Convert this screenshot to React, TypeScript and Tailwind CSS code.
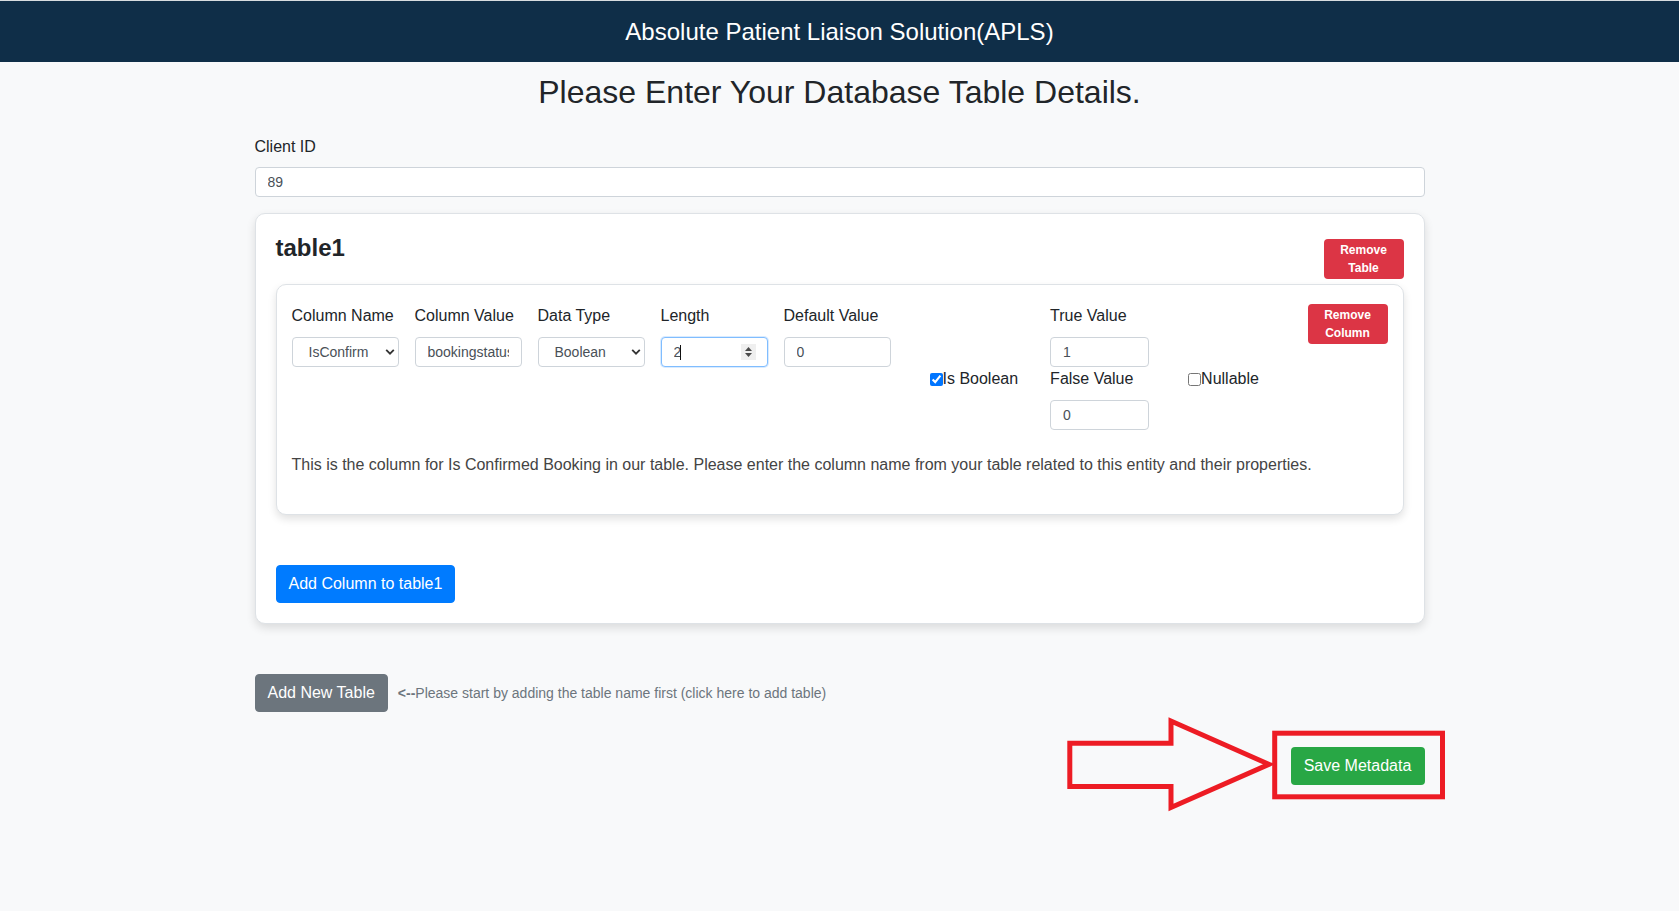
import React from "react";

function Chevron() {
  return (
    <svg
      className="pointer-events-none absolute right-[4px] top-1/2 -translate-y-1/2"
      width="10"
      height="7"
      viewBox="0 0 10 7"
    >
      <path d="M1.2 1.4 L5 5.2 L8.8 1.4" fill="none" stroke="#333" strokeWidth="1.8" />
    </svg>
  );
}

function Label({ children }: { children: React.ReactNode }) {
  return <label className="block text-[16px] leading-[24px] mb-[9px] whitespace-nowrap">{children}</label>;
}

const baseCls =
  "block h-[30px] rounded-[4px] border border-[#ced4da] bg-white px-3 text-[14px] text-[#495057] outline-none";
const inputCls = baseCls + " w-[107px]";
const smallCls = baseCls + " w-[99px]";

export default function App() {
  return (
    <div className="min-h-[911px] bg-[#f8f9fa] font-['Liberation_Sans',Arial,sans-serif] text-[#212529]">
      <header className="flex h-[62px] items-center justify-center border-t border-[#d8dce0] bg-[#0f2e48]">
        <h1 className="text-[24px] leading-none text-white">Absolute Patient Liaison Solution(APLS)</h1>
      </header>

      <main className="mx-auto w-[1170px]">
        <h2 className="mt-[11px] text-center text-[32px] leading-[1.2]">Please Enter Your Database Table Details.</h2>

        <label className="mt-[24px] block text-[16px] leading-[24px]">Client ID</label>
        <input
          className="mt-[8px] block h-[30px] w-full rounded-[4px] border border-[#ced4da] bg-white px-3 text-[14px] text-[#495057] outline-none"
          defaultValue="89"
        />

        <section className="mt-4 rounded-[10px] border border-[#dee2e6] bg-white px-5 pb-[20px] pt-[18px] shadow-[0_4px_10px_rgba(0,0,0,0.12)]">
          <div className="flex items-start justify-between">
            <h3 className="mt-[2px] text-[24px] font-bold leading-[1.2]">table1</h3>
            <button className="mt-[7px] h-[40px] w-[80px] rounded-[4px] bg-[#dc3545] text-[12px] font-bold leading-[18px] text-white">
              Remove
              <br />
              Table
            </button>
          </div>

          <div className="mt-[5px] rounded-[10px] border border-[#dee2e6] bg-white px-[15px] pb-[37px] pt-[19px] shadow-[0_4px_8px_rgba(0,0,0,0.12)]">
            <div className="flex items-start">
              <div className="w-[107px]">
                <Label>Column Name</Label>
                <div className="relative">
                  <select className={inputCls + " appearance-none pl-4 pr-5"} defaultValue="IsConfirm">
                    <option>IsConfirm</option>
                  </select>
                  <Chevron />
                </div>
              </div>

              <div className="ml-4 w-[107px]">
                <Label>Column Value</Label>
                <input className={inputCls} defaultValue="bookingstatus" />
              </div>

              <div className="ml-4 w-[107px]">
                <Label>Data Type</Label>
                <div className="relative">
                  <select className={inputCls + " appearance-none pl-4 pr-5"} defaultValue="Boolean">
                    <option>Boolean</option>
                  </select>
                  <Chevron />
                </div>
              </div>

              <div className="ml-4 w-[107px]">
                <Label>Length</Label>
                <div className="relative">
                  <input
                    className="block h-[30px] w-[107px] rounded-[4px] border border-[#80bdff] bg-white px-3 text-[14px] text-[#495057] shadow-[0_0_0_1px_rgba(0,123,255,0.15)] outline-none"
                    defaultValue="2"
                  />
                  <span className="pointer-events-none absolute left-[19px] top-[8px] h-[15px] w-px bg-[#111]" />
                  <svg
                    className="pointer-events-none absolute right-[12px] top-[7px]"
                    width="15"
                    height="16"
                    viewBox="0 0 15 16"
                  >
                    <rect width="15" height="16" fill="#efefef" />
                    <path d="M4 7 L11 7 L7.5 3 Z" fill="#4a4a4a" />
                    <path d="M4 9 L11 9 L7.5 13 Z" fill="#4a4a4a" />
                  </svg>
                </div>
              </div>

              <div className="ml-4 w-[107px]">
                <Label>Default Value</Label>
                <input className={inputCls} defaultValue="0" />
              </div>

              <label className="ml-[39px] mt-[63px] flex items-center text-[16px] leading-[24px] whitespace-nowrap">
                <input type="checkbox" defaultChecked className="m-0 h-[13px] w-[13px]" />
                Is Boolean
              </label>

              <div className="ml-[32px] w-[99px]">
                <Label>True Value</Label>
                <input className={smallCls} defaultValue="1" />
                <label className="block text-[16px] leading-[24px] mb-[9px] whitespace-nowrap">False Value</label>
                <input className={smallCls} defaultValue="0" />
              </div>

              <label className="ml-[39px] mt-[63px] flex items-center text-[16px] leading-[24px] whitespace-nowrap">
                <input type="checkbox" className="m-0 h-[13px] w-[13px]" />
                Nullable
              </label>

              <button className="ml-auto mt-0 h-[40px] w-[80px] rounded-[4px] bg-[#dc3545] text-[12px] font-bold leading-[18px] text-white">
                Remove
                <br />
                Column
              </button>
            </div>

            <p className="mt-[23px] text-[16px] leading-[24px] text-[#444]">
              This is the column for Is Confirmed Booking in our table. Please enter the column name from your table related to
              this entity and their properties.
            </p>
          </div>

          <button className="mt-[50px] h-[38px] rounded-[4px] border border-[#007bff] bg-[#007bff] px-3 text-[16px] text-white">
            Add Column to table1
          </button>
        </section>

        <div className="mt-[50px] flex items-center">
          <button className="h-[38px] rounded-[4px] border border-[#6c757d] bg-[#6c757d] px-3 text-[16px] text-white">
            Add New Table
          </button>
          <span className="ml-[10px] text-[14px] text-[#6c757d]">
            <span className="font-bold">&lt;--</span>Please start by adding the table name first (click here to add table)
          </span>
        </div>

        <div className="relative mt-[35px] flex justify-end">
          <button className="h-[38px] w-[134px] rounded-[4px] bg-[#28a745] text-[16px] text-white">Save Metadata</button>
          <svg
            className="pointer-events-none absolute left-[809.5px] top-[-31px]"
            width="384"
            height="98"
            viewBox="1064 716 384 98"
          >
            <path
              d="M1069.8 743.2 L1171 743.2 L1171 721 L1269 764.3 L1171 807.5 L1171 786.5 L1069.8 786.5 Z"
              fill="none"
              stroke="#ed1c24"
              strokeWidth="5"
              strokeLinejoin="miter"
            />
            <rect x="1274.7" y="733.2" width="167.8" height="63.6" fill="none" stroke="#ed1c24" strokeWidth="5" />
          </svg>
        </div>
      </main>
    </div>
  );
}
